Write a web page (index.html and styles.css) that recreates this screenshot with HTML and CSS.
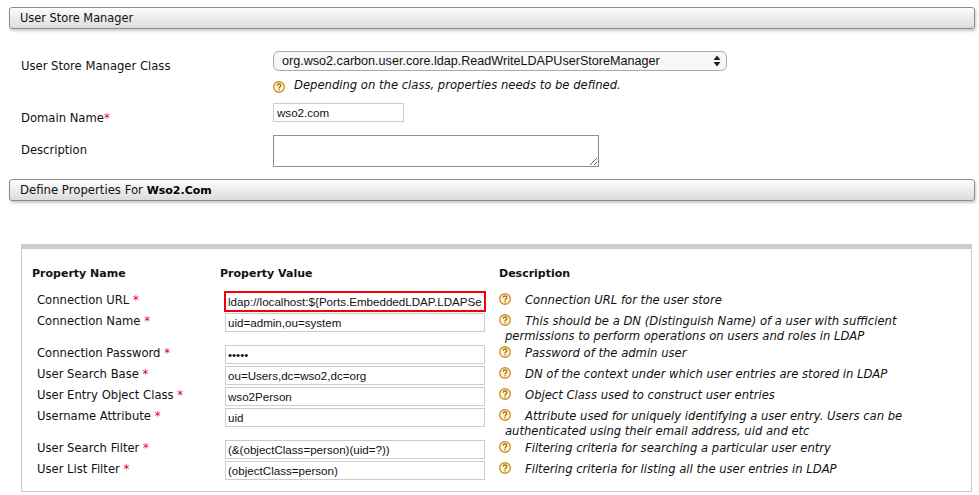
FILE: index.html
```html
<!DOCTYPE html>
<html lang="en">
<head>
<meta charset="utf-8">
<title>User Store Manager</title>
<link rel="stylesheet" href="styles.css">
</head>
<body>
<svg class="defs" width="0" height="0" aria-hidden="true"><symbol id="help" viewBox="0 0 12 12"><circle cx="6" cy="6" r="5.3" fill="#fff6e0" stroke="#d58f22" stroke-width="1.4"/><path d="M4.2 4.8C4.2 3.6 5 3 6 3s1.9.6 1.9 1.6c0 1.3-1.9 1.3-1.9 2.8" fill="none" stroke="#a87018" stroke-width="1.3"/><rect x="5.4" y="8.2" width="1.3" height="1.3" fill="#a87018"/></symbol></svg>

<h2 class="bar bar-first">User Store Manager</h2>

<section class="form">
  <div class="form-row row-class">
    <label class="form-label label-class">User Store Manager Class</label>
    <div class="form-field">
      <div class="select">
        <span>org.wso2.carbon.user.core.ldap.ReadWriteLDAPUserStoreManager</span>
        <svg width="8" height="12" viewBox="0 0 8 12"><path d="M4 0.5 7.5 5H.5zM4 11.5 .5 7h7z" fill="#222"/></svg>
      </div>
      <p class="hint"><svg class="help"><use href="#help"/></svg><em>Depending on the class, properties needs to be defined.</em></p>
    </div>
  </div>
  <div class="form-row row-domain">
    <label class="form-label label-domain">Domain Name<span class="req">*</span></label>
    <input class="domain" type="text" value="wso2.com">
  </div>
  <div class="form-row row-desc">
    <label class="form-label label-desc">Description</label>
    <textarea class="desc"></textarea>
  </div>
</section>

<h2 class="bar bar-second">Define Properties For <b>Wso2.Com</b></h2>

<section class="box">
  <table>
    <thead>
      <tr><th class="c-name">Property Name</th><th class="c-value">Property Value</th><th>Description</th></tr>
    </thead>
    <tbody>
      <tr><td class="c-name">Connection URL <span class="req">*</span></td><td class="c-value"><input class="url" type="text" value="ldap://localhost:${Ports.EmbeddedLDAP.LDAPServerPort}"></td><td><svg class="help"><use href="#help"/></svg><em>Connection URL for the user store</em></td></tr>
      <tr class="r-tall"><td class="c-name">Connection Name <span class="req">*</span></td><td class="c-value"><input type="text" value="uid=admin,ou=system"></td><td><svg class="help"><use href="#help"/></svg><em>This should be a DN (Distinguish Name) of a user with sufficient<span class="wrapped">permissions to perform operations on users and roles in LDAP</span></em></td></tr>
      <tr><td class="c-name">Connection Password <span class="req">*</span></td><td class="c-value"><input type="password" value="admin"></td><td><svg class="help"><use href="#help"/></svg><em>Password of the admin user</em></td></tr>
      <tr><td class="c-name">User Search Base <span class="req">*</span></td><td class="c-value"><input type="text" value="ou=Users,dc=wso2,dc=org"></td><td><svg class="help"><use href="#help"/></svg><em>DN of the context under which user entries are stored in LDAP</em></td></tr>
      <tr><td class="c-name">User Entry Object Class <span class="req">*</span></td><td class="c-value"><input type="text" value="wso2Person"></td><td><svg class="help"><use href="#help"/></svg><em>Object Class used to construct user entries</em></td></tr>
      <tr class="r-tall"><td class="c-name">Username Attribute <span class="req">*</span></td><td class="c-value"><input type="text" value="uid"></td><td><svg class="help"><use href="#help"/></svg><em>Attribute used for uniquely identifying a user entry. Users can be<span class="wrapped">authenticated using their email address, uid and etc</span></em></td></tr>
      <tr><td class="c-name">User Search Filter <span class="req">*</span></td><td class="c-value"><input type="text" value="(&amp;(objectClass=person)(uid=?))"></td><td><svg class="help"><use href="#help"/></svg><em>Filtering criteria for searching a particular user entry</em></td></tr>
      <tr><td class="c-name">User List Filter <span class="req">*</span></td><td class="c-value"><input type="text" value="(objectClass=person)"></td><td><svg class="help"><use href="#help"/></svg><em>Filtering criteria for listing all the user entries in LDAP</em></td></tr>
    </tbody>
  </table>
</section>
</body>
</html>
```
FILE: styles.css
```css
* { box-sizing: border-box; }
html, body { overflow: hidden; }
body {
  margin: 0;
  padding: 7px 4px 0 9px;
  height: 495px;
  background: #fff;
  color: #111;
  font: 11.6px/15px "DejaVu Sans", sans-serif;
}
.defs { position: absolute; }
.bar {
  margin: 0;
  height: 22px;
  padding: 3px 0 0 10px;
  font-size: 11.4px;
  line-height: 15px;
  font-weight: normal;
  color: #111;
  border: 1px solid #8c8c8c;
  border-radius: 3px;
  background: linear-gradient(#fdfdfd, #dcdcdc);
  box-shadow: 1px 2px 3px rgba(0, 0, 0, .22);
}
.bar-second { font-size: 11.7px; }
.bar b { font-size: 11px; color: #000; }
.form { height: 150px; padding: 22px 0 0 12px; }
.form-row { display: flex; }
.form-label { width: 252px; flex: none; color: #111; }
.form-field { width: 454px; }
.label-class { padding-top: 8px; }
.select {
  display: flex;
  align-items: center;
  justify-content: space-between;
  height: 20px;
  padding: 0 5px 0 8px;
  border: 1px solid #aaa;
  border-radius: 6px;
  background: #f8f8f8;
  font: 12.6px/18px "Liberation Sans", sans-serif;
  color: #111;
}
.hint { margin: 0; padding-bottom: 3px; height: 32px; display: flex; align-items: center; }
.hint .help { margin-right: 9px; margin-top: 2px; }
.help { width: 12px; height: 12px; flex: none; }
.row-domain { height: 32px; }
.label-domain { padding-top: 8px; }
.req { color: #e8001c; }
.row-desc { height: 44px; }
.label-desc { padding-top: 8px; }
input, textarea {
  font: 11.6px "Liberation Sans", sans-serif;
  color: #111;
  background: #fff;
  outline: 0;
  border-radius: 0;
}
.domain { width: 131px; height: 19px; padding: 0 3px; border: 1px solid #ccc; }
.desc { display: block; width: 326px; height: 32px; border: 1px solid #8e8e8e; padding: 0; }
.box {
  margin: 43px 3px 0 12px;
  height: 248px;
  border: 1px solid #ccc;
  border-top: 5px solid #ccc;
}
table { border-collapse: collapse; width: 100%; table-layout: fixed; }
th, td { text-align: left; vertical-align: top; }
th { font-size: 11px; font-weight: bold; height: 41px; padding: 17px 0 0; color: #111; }
thead th:first-child { padding-left: 10px; width: 198px; }
thead th.c-value { width: 279px; }
td { height: 21px; padding: 3px 0 0; color: #111; }
td.c-name { padding-left: 15px; }
.r-tall td { height: 32px; }
td input {
  display: block;
  width: 260px;
  height: 19px;
  margin-left: 5px;
  padding: 0 2px;
  border: 1px solid #ccc;
}
td.c-value { padding-top: 2px; }
td input.url { outline: 2px solid #f00008; border-color: #f00008; outline-offset: -1px; }
td .help { margin-right: 14px; vertical-align: -1px; }
.wrapped { display: block; height: 14px; margin-left: 6px; }
```
